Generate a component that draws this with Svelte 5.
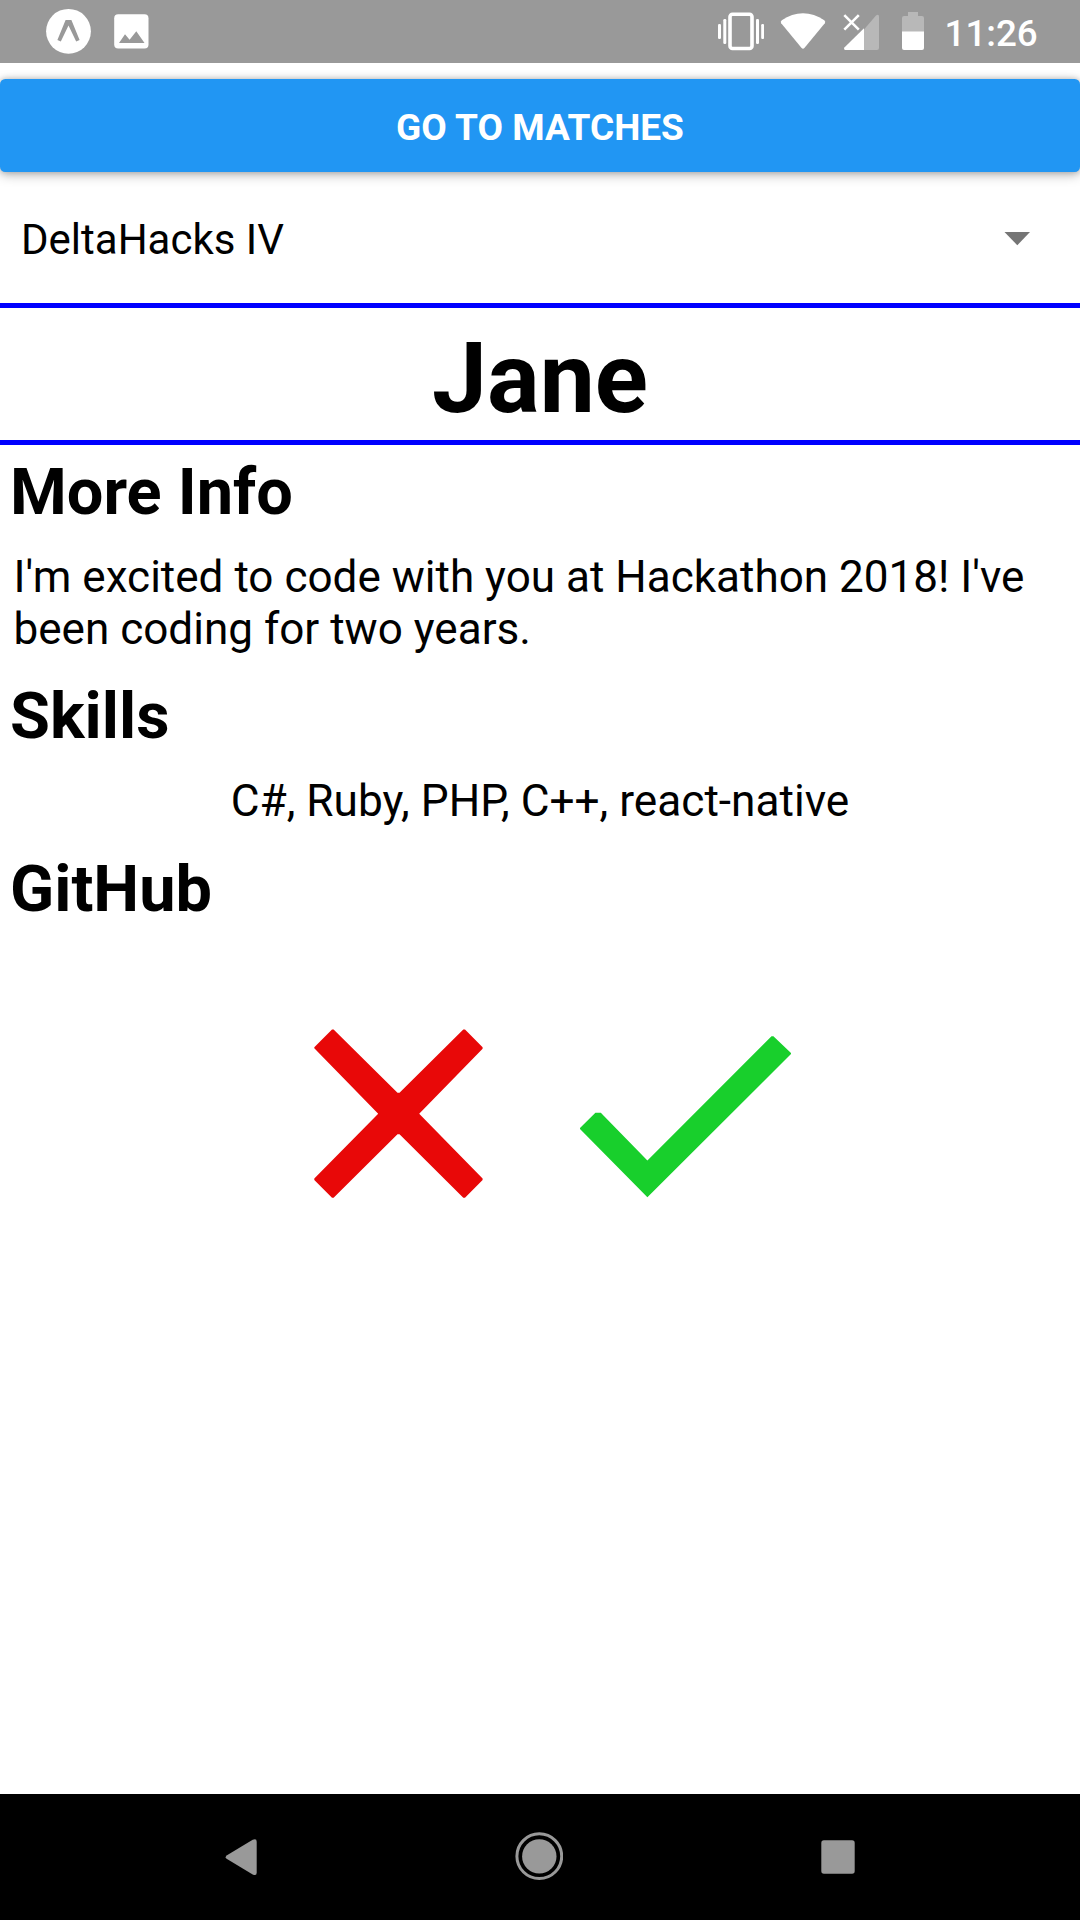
<script>
  const profile = {
    name: 'Jane',
    info: "I'm excited to code with you at Hackathon 2018! I've been coding for two years.",
    skills: ['C#', 'Ruby', 'PHP', 'C++', 'react-native'],
  };
</script>

<div class="screen">
  <header class="status">
    <div class="notifications">
      <svg width="45" height="63" viewBox="46 0 45 63">
        <circle cx="68.5" cy="31.3" r="22.4" fill="#fff" />
        <path d="M65.6 20.1H71.4L79.6 39.9 76.2 41.5 68.5 25.5 60.8 41.5 57.4 39.9Z" fill="#999" />
      </svg>
      <svg width="35" height="63" viewBox="114 0 35 63">
        <rect x="114.2" y="14.2" width="34.3" height="34.4" rx="4" fill="#fff" />
        <path d="M119 43 125 34.3 129.6 39.8 136.3 31.3 144.5 43Z" fill="#999" />
      </svg>
    </div>
    <div class="system">
      <svg width="46" height="63" viewBox="718 0 46 63" fill="#fff">
        <rect x="730" y="14.3" width="22" height="34.2" rx="2.5" fill="none" stroke="#fff" stroke-width="3.6" />
        <rect x="718" y="24" width="3" height="15" rx="1.2" />
        <rect x="723.3" y="19" width="3" height="25" rx="1.2" />
        <rect x="756" y="19" width="3" height="25" rx="1.2" />
        <rect x="761.2" y="24" width="3" height="15" rx="1.2" />
      </svg>
      <svg class="wifi" width="46" height="63" viewBox="780 0 46 63">
        <path d="M781.2 23.3Q780 21.6 781.8 20.2C795 10.8 811 10.8 824.3 20.2Q826 21.6 824.8 23.3L804.4 48Q803 49.6 801.6 48Z" fill="#fff" />
      </svg>
      <svg class="signal" width="36" height="63" viewBox="843 0 36 63">
        <path d="M864 29.4 876 15.6Q879 13.5 879 16.8V48Q879 50 877 50H864Z" fill="#b8b8b8" />
        <path d="M864 28.3V50H845Q843.2 49.2 844.4 47.6Z" fill="#fff" />
        <path d="M844.3 15.2 858.8 29.7M858.8 15.2 844.3 29.7" stroke="#fff" stroke-width="2.6" />
      </svg>
      <svg class="battery" width="22" height="63" viewBox="902 0 22 63">
        <path d="M902 32V18Q902 16 904 16H908V12H918V16H922Q924 16 924 18V32Z" fill="#b8b8b8" />
        <path d="M902 31.5H924V48Q924 50 922 50H904Q902 50 902 48Z" fill="#fff" />
      </svg>
      <span class="time">11:26</span>
    </div>
  </header>

  <main>
    <button class="matches">GO TO MATCHES</button>
    <div class="picker">
      <span>DeltaHacks IV</span>
      <svg width="26" height="14" viewBox="0 0 26 14"><path d="M.5 0H26L13.3 13.3Z" fill="#757575" /></svg>
    </div>
    <h1>{profile.name}</h1>
    <h2>More Info</h2>
    <p>{profile.info}</p>
    <h2>Skills</h2>
    <p class="skills">{profile.skills.join(', ')}</p>
    <h2>GitHub</h2>
    <div class="choices">
      <svg width="169" height="169" viewBox="314 1029 169 169">
        <path d="M314.3 1048.2V1047.2L332 1029.4H333.6L397.5 1092.7H399.5L463.3 1029.4H465L482.6 1047.2V1048.8L419.2 1113.7 482.6 1178.6V1180L465 1197.7H463.3L399.5 1134.3H397.5L333.6 1197.7H332L314.3 1180V1178.6L378.2 1113.7Z" fill="#e80808" />
      </svg>
      <svg width="212" height="169" viewBox="580 1029 212 169">
        <path d="M580 1128V1129L647.4 1197.3 791 1054V1053L773.4 1036.3H771.5L647.4 1160.4 600.8 1112.7H595.4Z" fill="#18cf2c" />
      </svg>
    </div>
  </main>

  <nav>
    <svg width="48" height="126" viewBox="216 1794 48 126">
      <path d="M227 1855.2 252.7 1839.8Q256.7 1838 256.7 1841.7V1872.8Q256.7 1876.3 252.7 1874.4L227 1859Q224.4 1857.2 227 1855.2Z" fill="#999" />
    </svg>
    <svg width="48" height="126" viewBox="515 1794 48 126">
      <circle cx="539.3" cy="1856.2" r="22.4" fill="none" stroke="#999" stroke-width="3" />
      <circle cx="539.3" cy="1856.4" r="17.2" fill="#999" />
    </svg>
    <svg width="48" height="126" viewBox="814 1794 48 126">
      <rect x="821.3" y="1840.3" width="33.4" height="33.4" rx="2.6" fill="#999" />
    </svg>
  </nav>
</div>

<style>
  :global(body) { margin: 0; background: #fff; }
  .screen {
    width: 1080px;
    height: 1920px;
    display: flex;
    flex-direction: column;
    overflow: hidden;
    background: #fff;
    color: #000;
    font-family: Roboto, sans-serif;
  }
  svg { display: block; flex: none; }
  .status {
    height: 63px;
    flex: none;
    display: flex;
    justify-content: space-between;
    padding: 0 41px 0 46px;
    background: #999;
  }
  .notifications { display: flex; gap: 23px; }
  .system {
    width: 321px;
    display: flex;
  }
  .wifi { margin-left: 16px; }
  .signal { margin-left: 17px; }
  .battery { margin-left: 23px; }
  .time {
    margin-left: 20.5px;
    color: #fff;
    font-size: 36.75px;
    font-weight: 500;
    line-height: 68px;
  }
  main { flex: 1; padding-top: 16px; }
  .matches {
    display: block;
    width: 100%;
    height: 93px;
    padding: 4px 0 0;
    border: 0;
    border-radius: 5.25px;
    background: #2196f3;
    box-shadow: 0 3px 12px rgba(0, 0, 0, .26), 0 0 6px rgba(0, 0, 0, .22);
    color: #fff;
    font: 700 37px/89px Roboto, sans-serif;
  }
  .picker {
    height: 131px;
    box-sizing: border-box;
    padding: 0 50px 0 21px;
    display: flex;
    align-items: center;
    justify-content: space-between;
    font-size: 42px;
    line-height: 50px;
  }
  .picker span { padding-top: 4px; }
  .picker svg { padding-top: 2px; }
  h1 {
    margin: 0;
    height: 132px;
    border: solid #00f;
    border-width: 5px 0;
    text-align: center;
    font-size: 98.4px;
    line-height: 141px;
  }
  h2 {
    height: 77px;
    margin: 0 10px;
    font-size: 64.9px;
    line-height: 79px;
  }
  h1 + h2 { margin-top: 8px; }
  p {
    margin: 21px 13.5px 22px;
    font-size: 44.05px;
    line-height: 52px;
  }
  .skills {
    margin-bottom: 23px;
    text-align: center;
    font-size: 44.2px;
  }
  .choices {
    display: flex;
    gap: 97px;
    padding: 102px 0 0 314px;
  }
  nav {
    height: 126px;
    flex: none;
    display: flex;
    justify-content: center;
    gap: 251px;
    padding-right: 2px;
    background: #000;
  }
</style>
